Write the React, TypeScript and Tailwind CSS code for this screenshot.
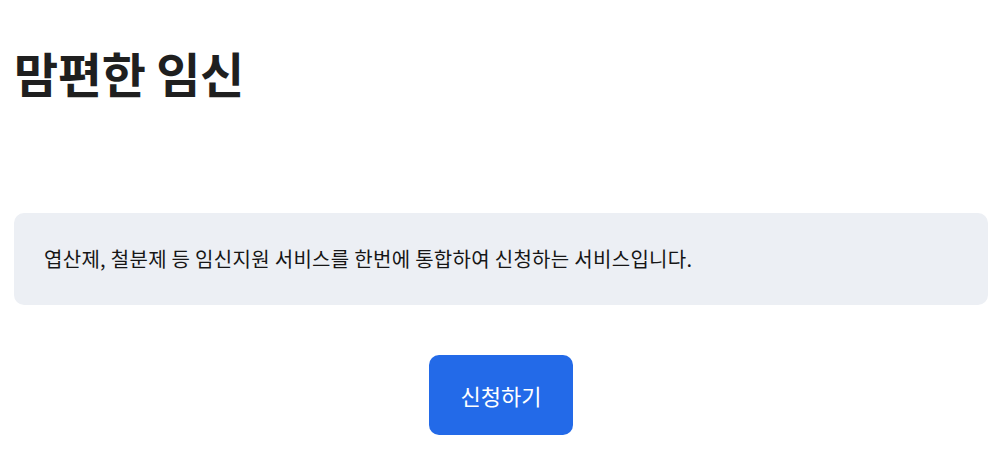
export default function App() {
  return (
    <main
      className="min-h-screen bg-white pl-[14px] pr-[8px] text-[#1f1f1f]"
      style={{ fontFamily: '"Noto Sans CJK KR", "Noto Sans", sans-serif' }}
    >
      <h1 className="pt-[36px] text-[48px] font-bold leading-[72px] tracking-[-0.3px]">맘편한 임신</h1>
      <section className="mt-[105px] rounded-[10px] bg-[#eceff4] px-[30px] py-[31px]">
        <p className="text-[20px] leading-[30px] tracking-[0.3px] text-[#161616]">
          엽산제, 철분제 등 임신지원 서비스를 한번에 통합하여 신청하는 서비스입니다.
        </p>
      </section>
      <div className="mt-[50px] flex justify-center">
        <button className="h-[80px] w-[144px] rounded-[10px] bg-[#236ae8] text-[22px] text-white">
          신청하기
        </button>
      </div>
    </main>
  );
}
